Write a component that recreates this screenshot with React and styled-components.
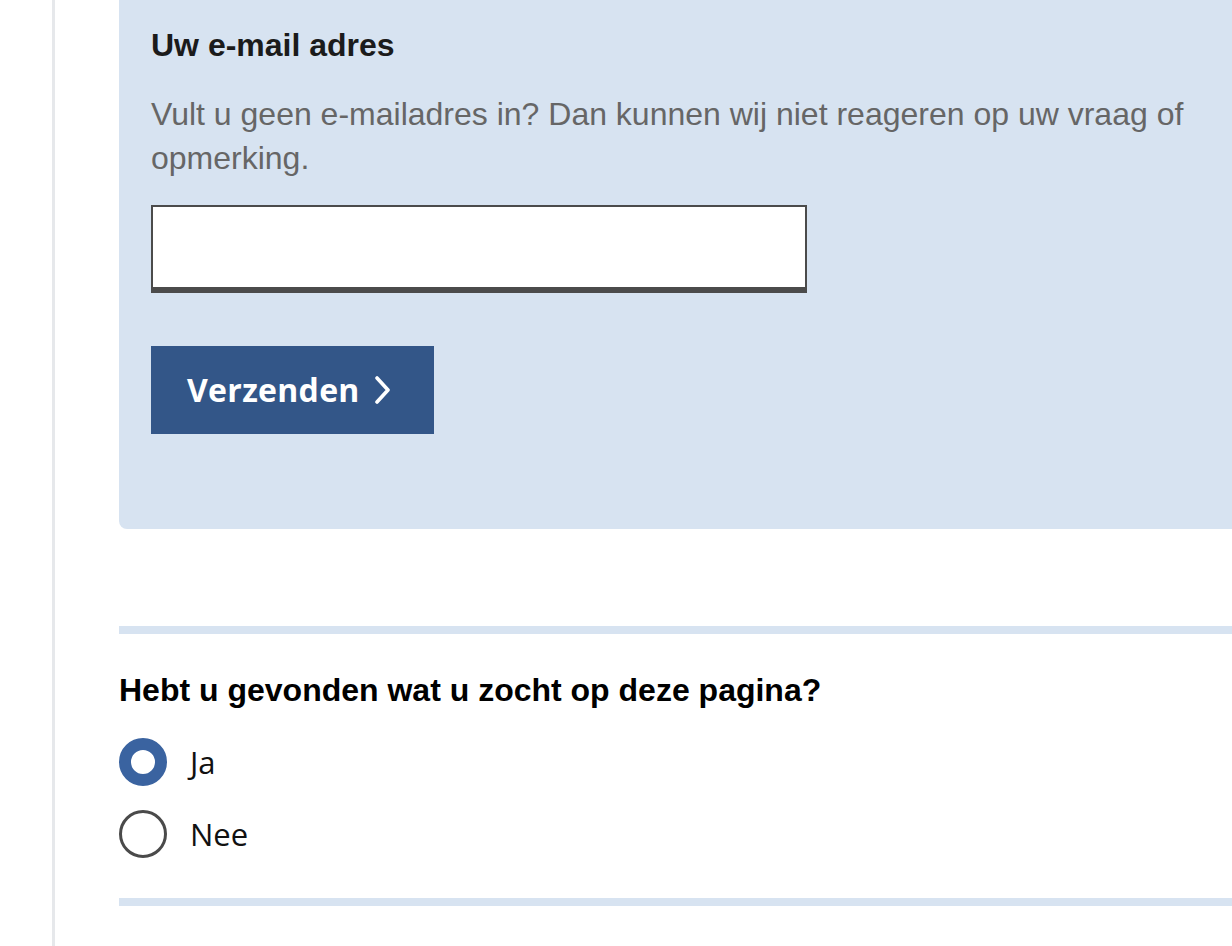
import React, { useState } from "react";
import styled, { createGlobalStyle } from "styled-components";

const GlobalStyle = createGlobalStyle`
  html, body { margin: 0; padding: 0; background: #ffffff; }
  * { box-sizing: border-box; }
`;

const Page = styled.div`
  display: flex;
  min-height: 946px;
  overflow: hidden;
`;

const Sidebar = styled.div`
  width: 55px;
  flex: none;
  border-right: 3px solid #e6e8eb;
`;

const Main = styled.main`
  flex: 1;
  min-width: 0;
  padding-left: 64px;
`;

const Panel = styled.section`
  background: #d7e3f1;
  padding: 25px 32px 95px 32px;
  border-bottom-left-radius: 8px;
`;

const Heading = styled.h2`
  margin: ${(p) => p.$mt || 0}px 0 0;
  font-family: "Liberation Sans", Arial, sans-serif;
  font-weight: 700;
  font-size: 32px;
  line-height: 40px;
  color: ${(p) => p.$color || "#1b1b1b"};
`;

const Hint = styled.p`
  margin: 27px 0 0;
  font-family: "Liberation Sans", Arial, sans-serif;
  font-size: 32px;
  line-height: 44px;
  color: #666666;
`;

const EmailInput = styled.input`
  display: block;
  margin-top: 25px;
  width: 656px;
  height: 88px;
  border: 2px solid #4b4b4b;
  border-bottom-width: 6px;
  border-radius: 0;
  background: #ffffff;
  padding: 0 16px;
  font-family: "Liberation Sans", Arial, sans-serif;
  font-size: 32px;
  outline: none;
`;

const SubmitButton = styled.button`
  display: flex;
  align-items: center;
  gap: 15px;
  margin-top: 53px;
  width: 283px;
  height: 88px;
  padding: 0 0 0 36px;
  border: none;
  border-radius: 0;
  background: #335688;
  color: #ffffff;
  font-family: "Open Sans", "Noto Sans", sans-serif;
  font-weight: 700;
  font-size: 32px;
  letter-spacing: 0.3px;
  line-height: 1;
  cursor: pointer;
`;

const Divider = styled.div`
  margin-top: ${(p) => p.$mt}px;
  height: 8px;
  background: #d7e3f1;
`;

const RadioList = styled.div`
  display: flex;
  flex-direction: column;
  gap: 24px;
  margin-top: 28px;
`;

const RadioRow = styled.label`
  display: flex;
  align-items: center;
  gap: 23px;
  height: 48px;
  cursor: pointer;
  font-family: "Open Sans", "Noto Sans", sans-serif;
  font-size: 31px;
  color: #111111;
`;

const HiddenInput = styled.input`
  position: absolute;
  opacity: 0;
  width: 0;
  height: 0;
  margin: 0;
`;

const RadioCircle = styled.span`
  width: 48px;
  height: 48px;
  flex: none;
  border-radius: 50%;
  background: #ffffff;
  border: ${(p) => (p.$checked ? "12px solid #3a63a0" : "3px solid #4a4a4a")};
`;

const Chevron = () => (
  <svg width="15" height="28" viewBox="0 0 15 28" aria-hidden="true">
    <polyline
      points="2,2 13,14 2,26"
      fill="none"
      stroke="#ffffff"
      strokeWidth="3.6"
      strokeLinecap="round"
      strokeLinejoin="round"
    />
  </svg>
);

export default function App() {
  const [answer, setAnswer] = useState("ja");
  const options = [
    { value: "ja", label: "Ja" },
    { value: "nee", label: "Nee" },
  ];
  return (
    <>
      <GlobalStyle />
      <Page>
        <Sidebar />
        <Main>
          <Panel>
            <Heading>Uw e-mail adres</Heading>
            <Hint>
              Vult u geen e-mailadres in? Dan kunnen wij niet reageren op uw vraag of opmerking.
            </Hint>
            <EmailInput type="email" aria-label="Uw e-mail adres" />
            <SubmitButton type="button">
              Verzenden
              <Chevron />
            </SubmitButton>
          </Panel>
          <Divider $mt={97} />
          <Heading $mt={36} $color="#000000">
            Hebt u gevonden wat u zocht op deze pagina?
          </Heading>
          <RadioList>
            {options.map((o) => (
              <RadioRow key={o.value}>
                <HiddenInput
                  type="radio"
                  name="gevonden"
                  value={o.value}
                  checked={answer === o.value}
                  onChange={() => setAnswer(o.value)}
                />
                <RadioCircle $checked={answer === o.value} />
                {o.label}
              </RadioRow>
            ))}
          </RadioList>
          <Divider $mt={40} />
        </Main>
      </Page>
    </>
  );
}
